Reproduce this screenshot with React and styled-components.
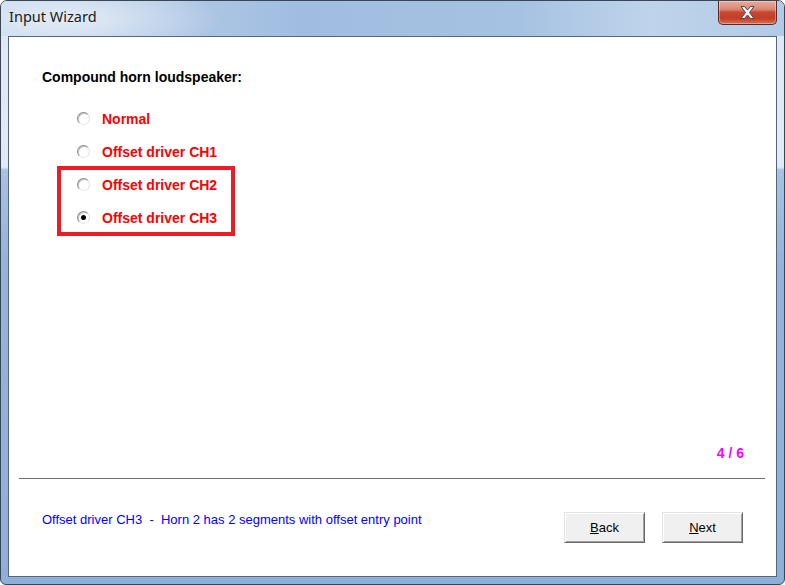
import React from "react";
import styled, { createGlobalStyle } from "styled-components";

const Global = createGlobalStyle`
  html, body { margin: 0; padding: 0; width: 785px; height: 585px; overflow: hidden; background: #fff; }
  * { box-sizing: border-box; }
`;

const Window = styled.div`
  width: 785px;
  height: 585px;
  display: flex;
  flex-direction: column;
  border: 1px solid #3a4656;
  border-radius: 7px 7px 6px 6px;
  padding: 0 7px 7px 7px;
  overflow: hidden;
  background: linear-gradient(
    to bottom,
    #dfe8f2 0,
    #e2eaf3 166px,
    #a7c3e3 169px,
    #94b4db 260px,
    #8eafd8 100%
  );
`;

const TitleBar = styled.div`
  height: 35px;
  margin: 0 -7px;
  padding: 0 7px 0 8px;
  display: flex;
  align-items: flex-start;
  background:
    radial-gradient(ellipse 150px 40px at 70px 18px, rgba(255, 255, 255, 0.6), rgba(255, 255, 255, 0) 100%),
    linear-gradient(to right, #c4d7ec 0, #b4cbe7 140px, #a0bde0 300px, #a6c2e2 520px, #bfd4eb 650px, #b2cae7 100%);
`;

const Title = styled.div`
  margin-top: 5px;
  font-family: "Noto Sans", "Open Sans", sans-serif;
  font-size: 14.5px;
  line-height: 20px;
  color: #1a1a1a;
`;

const CloseButton = styled.div`
  margin-left: auto;
  width: 59px;
  height: 24px;
  border: 1px solid #5a2a22;
  border-top: none;
  border-radius: 0 0 5px 5px;
  display: flex;
  align-items: center;
  justify-content: center;
  background: linear-gradient(to bottom, #e9aa9c 0, #d98a78 35%, #c8452e 50%, #c23d26 75%, #d5705a 100%);
  box-shadow: inset 0 0 0 1px rgba(255, 255, 255, 0.35);
`;

const Client = styled.div`
  flex: 1;
  background: #fff;
  border: 1px solid #56657a;
  display: flex;
  flex-direction: column;
  font-family: "Liberation Sans", Arial, sans-serif;
`;

const Heading = styled.div`
  margin: 32px 0 0 33px;
  font-size: 14px;
  font-weight: bold;
  line-height: 16px;
  color: #000;
`;

const List = styled.div`
  margin: 17px 0 0 50px;
  display: flex;
  flex-direction: column;
`;

const Highlight = styled.div`
  width: 174px;
  display: flex;
  flex-direction: column;
  outline: 4px solid #ed1c24;
  outline-offset: -2px;
`;

const Row = styled.div`
  height: 33px;
  padding-left: 18px;
  display: flex;
  align-items: center;
  gap: 12px;
`;

const Radio = styled.span`
  position: relative;
  width: 13px;
  height: 13px;
  border-radius: 50%;
  background: #fff;
  border: 1px solid;
  border-color: #8c8c8c #dedede #e6e6e6 #8c8c8c;
  box-shadow: inset 1px 1px 0 #c4c4c4;
  flex: none;
  &::after {
    content: "";
    display: ${(p) => (p.$checked ? "block" : "none")};
    position: absolute;
    left: 3px;
    top: 3px;
    width: 5px;
    height: 5px;
    border-radius: 50%;
    background: #000;
  }
`;

const Label = styled.span`
  font-size: 14px;
  font-weight: bold;
  line-height: 16px;
  color: #ff0000;
`;

const Spacer = styled.div`
  flex: 1;
`;

const Counter = styled.div`
  align-self: flex-end;
  margin-right: 32px;
  font-size: 14px;
  font-weight: bold;
  line-height: 16px;
  color: #ff00ff;
`;

const Separator = styled.div`
  margin: 17px 11px 0 10px;
  height: 1px;
  background: #707070;
`;

const Footer = styled.div`
  display: flex;
  align-items: flex-start;
  padding: 33px 33px 33px 33px;
`;

const Status = styled.div`
  font-size: 13px;
  line-height: 16px;
  color: #0000ff;
  white-space: pre;
`;

const Buttons = styled.div`
  margin-left: auto;
  display: flex;
  gap: 17px;
`;

const Button = styled.button`
  width: 81px;
  height: 31px;
  padding: 0;
  background: #f0f0f0;
  border: 1px solid;
  border-color: #e3e3e3 #696969 #696969 #e3e3e3;
  box-shadow: inset 1px 1px 0 #ffffff, inset -1px -1px 0 #a0a0a0;
  font-family: "Liberation Sans", Arial, sans-serif;
  font-size: 13px;
  color: #000;
  u { text-decoration: underline; }
`;

const options = [
  { label: "Normal" },
  { label: "Offset driver CH1" },
];
const highlighted = [
  { label: "Offset driver CH2" },
  { label: "Offset driver CH3", checked: true },
];

function Option({ label, checked }) {
  return (
    <Row>
      <Radio $checked={checked} />
      <Label>{label}</Label>
    </Row>
  );
}

export default function App() {
  return (
    <>
      <Global />
      <Window>
        <TitleBar>
          <Title>Input Wizard</Title>
          <CloseButton>
            <svg width="17" height="15" viewBox="0 0 17 15">
              <path
                d="M2 1.5 L5.5 1.5 L8.5 5 L11.5 1.5 L15 1.5 L10.5 7.5 L15 13.5 L11.5 13.5 L8.5 10 L5.5 13.5 L2 13.5 L6.5 7.5 Z"
                fill="#f4f4f4"
                stroke="#4a4a4a"
                strokeWidth="1"
                strokeLinejoin="round"
              />
            </svg>
          </CloseButton>
        </TitleBar>
        <Client>
          <Heading>Compound horn loudspeaker:</Heading>
          <List>
            {options.map((o) => (
              <Option key={o.label} {...o} />
            ))}
            <Highlight>
              {highlighted.map((o) => (
                <Option key={o.label} {...o} />
              ))}
            </Highlight>
          </List>
          <Spacer />
          <Counter>4 / 6</Counter>
          <Separator />
          <Footer>
            <Status>Offset driver CH3  -  Horn 2 has 2 segments with offset entry point</Status>
            <Buttons>
              <Button>
                <u>B</u>ack
              </Button>
              <Button>
                <u>N</u>ext
              </Button>
            </Buttons>
          </Footer>
        </Client>
      </Window>
    </>
  );
}
